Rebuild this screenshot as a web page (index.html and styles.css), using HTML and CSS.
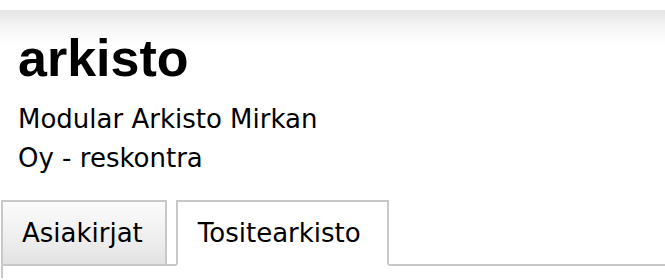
FILE: index.html
```html
<!DOCTYPE html>
<html lang="fi">
<head>
<meta charset="utf-8">
<title>arkisto</title>
<link rel="stylesheet" href="styles.css">
</head>
<body>
<div class="page">
  <header class="head">
    <h1 class="title">arkisto</h1>
    <p class="subtitle">Modular Arkisto Mirkan Oy - reskontra</p>
  </header>
  <nav class="tabs">
    <a class="tab">Asiakirjat</a>
    <a class="tab tab-active">Tositearkisto</a>
  </nav>
  <div class="panel"></div>
</div>
</body>
</html>
```

FILE: styles.css
```css
html, body {
  margin: 0;
  padding: 0;
  background: #ffffff;
  overflow: hidden;
}

.page {
  padding-top: 10px;
  color: #000;
}

.head {
  background: linear-gradient(to bottom, #e4e4e4 0px, #f6f6f6 18px, #ffffff 36px);
  padding: 18px 0 0 18px;
}

.title {
  margin: 0;
  font-family: "Liberation Sans", Arial, sans-serif;
  font-weight: 700;
  font-size: 52px;
  line-height: 60px;
  letter-spacing: 0;
}

.subtitle {
  margin: 12px 0 0 0;
  max-width: 320px;
  font-family: "DejaVu Sans", Verdana, sans-serif;
  font-size: 26px;
  line-height: 39px;
}

.tabs {
  display: flex;
  gap: 9px;
  margin: 22px 0 -2px 1px;
  align-items: flex-end;
}

.tab {
  display: block;
  font-family: "DejaVu Sans", Verdana, sans-serif;
  font-size: 26px;
  line-height: 62px;
  padding: 0 22px 0 19px;
  border: 2px solid #c8c8c8;
  background: linear-gradient(to bottom, #fbfbfb 0%, #eeeeee 60%, #e2e2e2 100%);
  color: #000;
}

.tab-active {
  position: relative;
  background: #ffffff;
  border-bottom-color: #ffffff;
  padding: 0 26px 0 20px;
}

.panel {
  margin-left: 1px;
  height: 12px;
  border-top: 2px solid #c8c8c8;
  border-left: 2px solid #c8c8c8;
}
```
